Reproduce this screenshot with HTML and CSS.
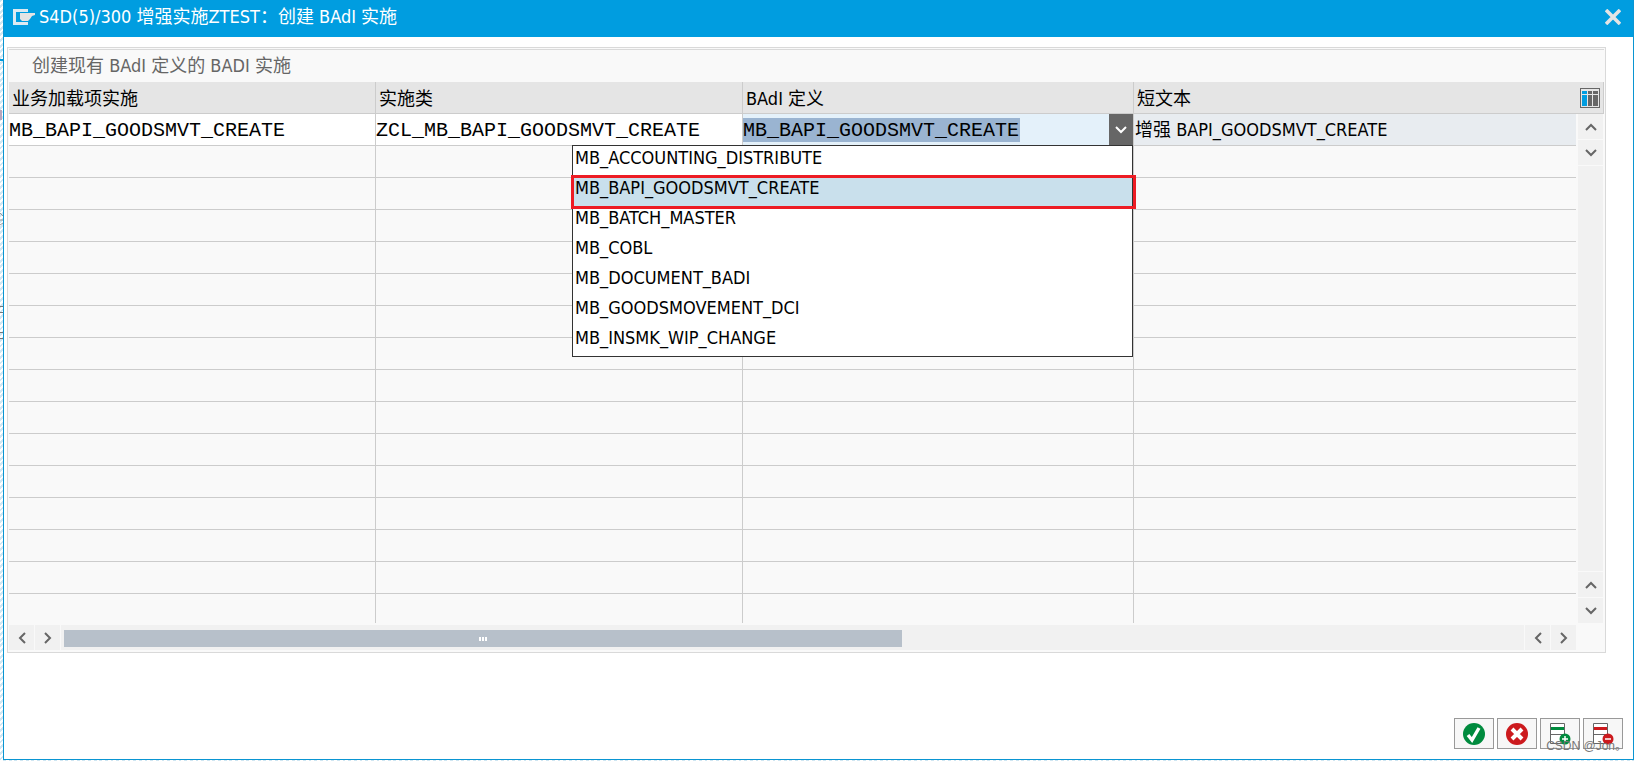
FILE: index.html
```html
<!DOCTYPE html>
<html lang="zh-CN">
<head>
<meta charset="utf-8">
<title>增强实施ZTEST：创建 BAdI 实施</title>
<link rel="stylesheet" href="styles.css">
</head>
<body>
<svg class="backdrop" width="3" height="340" aria-hidden="true"><path d="M0 59h3v2H0z" fill="#009de0"/><path d="M0 110h2v10H0z" fill="#b9a6bd"/><path d="M0 213l3 3M0 220h3M0 225l3-2" stroke="#999" fill="none"/><path d="M0 306h3v1H0zM0 312h3v1H0zM0 332h3v1H0zM0 338h3v1H0z" fill="#777"/></svg>
<div class="dialog" role="dialog" aria-labelledby="dlg-title">
  <header class="titlebar">
    <svg class="title-icon" width="22" height="16" viewBox="0 0 22 16" aria-hidden="true"><path d="M0 0h15v3H3v10h12v3H0z" fill="#dceaf2"/><path d="M7 4h15v2l-3 1-2 3-2 2H9l-2-2z" fill="#e4e4e4"/></svg>
    <h1 class="title" id="dlg-title">S4D(5)/300 增强实施ZTEST：创建 BAdI 实施</h1>
    <button class="close" type="button" aria-label="关闭"><svg width="16" height="16" viewBox="0 0 16 16"><path d="M1 1l14 14M15 1L1 15" stroke="#e4e4e4" stroke-width="3.6" fill="none"/></svg></button>
  </header>
  <main class="content">
    <section class="group">
      <h2 class="group-title">创建现有 BAdI 定义的 BADI 实施</h2>
      <div class="grid">
        <table class="table">
          <colgroup><col class="c1"><col class="c2"><col class="c3"><col></colgroup>
          <thead><tr><th>业务加载项实施</th><th>实施类</th><th>BAdI 定义</th><th>短文本</th></tr></thead>
          <tbody>
            <tr class="active">
              <td><input class="field" aria-label="业务加载项实施" value="MB_BAPI_GOODSMVT_CREATE"></td>
              <td><input class="field" aria-label="实施类" value="ZCL_MB_BAPI_GOODSMVT_CREATE"></td>
              <td class="combo-cell">
                <div class="combo">
                  <input class="field selected-text" role="combobox" aria-expanded="true" aria-controls="badi-list" aria-label="BAdI 定义" value="MB_BAPI_GOODSMVT_CREATE">
                  <button class="combo-button" type="button" aria-label="打开列表"><svg width="12" height="8" viewBox="0 0 12 8"><path d="M1 1l5 5 5-5" stroke="#fff" stroke-width="2" fill="none"/></svg></button>
                </div>
                <ul class="options" id="badi-list" role="listbox">
                  <li role="option">MB_ACCOUNTING_DISTRIBUTE</li>
                  <li class="current" role="option" aria-selected="true">MB_BAPI_GOODSMVT_CREATE</li>
                  <li role="option">MB_BATCH_MASTER</li>
                  <li role="option">MB_COBL</li>
                  <li role="option">MB_DOCUMENT_BADI</li>
                  <li role="option">MB_GOODSMOVEMENT_DCI</li>
                  <li role="option">MB_INSMK_WIP_CHANGE</li>
                </ul>
              </td>
              <td class="readonly">增强 BAPI_GOODSMVT_CREATE</td>
            </tr>
            <tr><td></td><td></td><td></td><td></td></tr>
            <tr><td></td><td></td><td></td><td></td></tr>
            <tr><td></td><td></td><td></td><td></td></tr>
            <tr><td></td><td></td><td></td><td></td></tr>
            <tr><td></td><td></td><td></td><td></td></tr>
            <tr><td></td><td></td><td></td><td></td></tr>
            <tr><td></td><td></td><td></td><td></td></tr>
            <tr><td></td><td></td><td></td><td></td></tr>
            <tr><td></td><td></td><td></td><td></td></tr>
            <tr><td></td><td></td><td></td><td></td></tr>
            <tr><td></td><td></td><td></td><td></td></tr>
            <tr><td></td><td></td><td></td><td></td></tr>
            <tr><td></td><td></td><td></td><td></td></tr>
            <tr><td></td><td></td><td></td><td></td></tr>
            <tr><td></td><td></td><td></td><td></td></tr>
          </tbody>
        </table>
        <div class="side">
          <div class="corner"><button class="config" type="button" aria-label="列设置"><svg width="20" height="20" viewBox="0 0 20 20"><rect width="20" height="20" fill="#666"/><rect x="1" y="1" width="18" height="18" fill="#e5e5e5"/><path d="M2 3h5v3H2zM2 7h5v11H2z" fill="#009de0"/><path d="M8 3h4v3H8zM8 7h4v11H8zM13 3h5v3h-5zM13 7h5v11h-5z" fill="#666"/></svg></button></div>
          <div class="vscroll">
            <button class="step" type="button" aria-label="向上"><svg width="12" height="8" viewBox="0 0 12 8"><path d="M1 7l5-5 5 5"/></svg></button>
            <button class="step" type="button" aria-label="向下"><svg width="12" height="8" viewBox="0 0 12 8"><path d="M1 1l5 5 5-5"/></svg></button>
            <div class="track"></div>
            <button class="step" type="button" aria-label="向上翻页"><svg width="12" height="8" viewBox="0 0 12 8"><path d="M1 7l5-5 5 5"/></svg></button>
            <button class="step" type="button" aria-label="向下翻页"><svg width="12" height="8" viewBox="0 0 12 8"><path d="M1 1l5 5 5-5"/></svg></button>
          </div>
        </div>
        <div class="hscroll">
          <button class="step" type="button" aria-label="向左"><svg width="8" height="12" viewBox="0 0 8 12"><path d="M7 1L2 6l5 5"/></svg></button>
          <button class="step" type="button" aria-label="向右"><svg width="8" height="12" viewBox="0 0 8 12"><path d="M1 1l5 5-5 5"/></svg></button>
          <div class="track"><div class="thumb"><i></i><i></i><i></i></div></div>
          <button class="step" type="button" aria-label="向左翻页"><svg width="8" height="12" viewBox="0 0 8 12"><path d="M7 1L2 6l5 5"/></svg></button>
          <button class="step" type="button" aria-label="向右翻页"><svg width="8" height="12" viewBox="0 0 8 12"><path d="M1 1l5 5-5 5"/></svg></button>
        </div>
      </div>
    </section>
  </main>
  <footer class="actions">
    <button class="action" type="button" aria-label="继续"><svg width="22" height="22" viewBox="0 0 22 22"><circle cx="11" cy="11" r="11" fill="#008b3e"/><path d="M5 12l4 5 7-12" stroke="#fff" stroke-width="3.4" fill="none"/></svg></button>
    <button class="action" type="button" aria-label="取消"><svg width="22" height="22" viewBox="0 0 22 22"><circle cx="11" cy="11" r="11" fill="#cc1a1e"/><path d="M6 6l10 10M16 6L6 16" stroke="#fff" stroke-width="4" fill="none"/></svg></button>
    <button class="action" type="button" aria-label="插入行"><svg width="22" height="22" viewBox="0 0 22 22"><path d="M1.500 20.500V.5h14v20z" fill="#fff" stroke="#666"/><path d="M1 11.500h15" stroke="#666"/><path d="M2 4h13v3H2z" fill="#008b3e"/><circle cx="16" cy="16" r="5.500" fill="#008b3e"/><path d="M16 13v6M13 16h6" stroke="#fff" stroke-width="1.500"/></svg></button>
    <button class="action" type="button" aria-label="删除行"><svg width="22" height="22" viewBox="0 0 22 22"><path d="M1.500 20.500V.5h14v20z" fill="#fff" stroke="#666"/><path d="M1 11.500h15" stroke="#666"/><path d="M2 4h13v3H2z" fill="#cc1a1e"/><circle cx="16" cy="16" r="5.500" fill="#cc1a1e"/><path d="M13 16h6" stroke="#fff" stroke-width="1.500"/></svg></button>
    <span class="watermark">CSDN @Jon。</span>
  </footer>
</div>
</body>
</html>
```
FILE: styles.css
```css
* { box-sizing: border-box; }
body {
  margin: 0;
  padding: 0 0 1px 3px;
  min-height: 100vh;
  display: flex;
  background: repeating-linear-gradient(135deg, #cfe6f2 0 2px, #fff 2px 4px);
  font-family: "DejaVu Sans Condensed", "Noto Sans CJK SC", sans-serif;
  font-size: 18px;
  line-height: 24px;
  color: #000;
}
button { padding: 0; border: 0; background: none; display: flex; align-items: center; justify-content: center; }
.backdrop { position: absolute; left: 0; top: 0; }
.dialog { flex: 1; min-width: 0; display: flex; flex-direction: column; background: #fff; border: 1px solid #0a95d2; border-top: 0; }
.titlebar { display: flex; align-items: center; height: 37px; padding: 0 12px 3px 9px; gap: 4px; background: #009de0; }
.title { margin: 0; flex: 1; font-size: 18px; font-weight: 400; color: #fff; }
.content { padding: 10px 27px 0 3px; }
.group { padding: 1px; background: #f9f9f9; border: 1px solid #d9d9d9; }
.group-title { margin: 0; padding: 4px 23px; border-top: 1px solid #d9d9d9; font-size: 18px; font-weight: 400; color: #666; }
.grid { display: grid; grid-template-columns: 1fr 28px; row-gap: 2px; padding-bottom: 1px; }
.table { width: 100%; table-layout: fixed; border-collapse: separate; border-spacing: 0; }
.c1, .c2 { width: 367px; }
.c3 { width: 391px; }
th { height: 32px; padding: 2px 3px 0; background: #e5e5e5; border-right: 1px solid #ccc; border-bottom: 1px solid #ccc; font-weight: 400; text-align: left; }
td { height: 32px; padding: 0; border-right: 1px solid #ccc; border-bottom: 1px solid #ccc; }
th:last-child, td:last-child { border-right: 0; }
tbody tr:last-child td { height: 29px; border-bottom: 0; }
.active td { background: #fff; }
.active .readonly { padding-left: 1px; background: #e8ecf0; }
.active .combo-cell { position: relative; background: #e4f1fa; }
.field { display: block; width: 100%; height: 24px; padding: 2px 0 0; border: 0; outline: 0; background: none; font: 20px/22px "Liberation Mono", monospace; color: #000; }
.combo { display: flex; align-items: center; justify-content: space-between; height: 31px; }
.selected-text { width: 277px; background: #9ab4d1; }
.combo-button { width: 24px; height: 31px; background: #666; }
.options { position: absolute; z-index: 2; top: 31px; right: 0; width: 561px; margin: 0; padding: 0; list-style: none; background: #fff; border: 1px solid #333; }
.options li { height: 30px; padding: 0 2px; }
.options .current { position: relative; background: #c9e0ec; }
.current::after { content: ""; position: absolute; inset: -1px -4px -3px -2px; border: 3px solid #ed1c24; }
.side { display: flex; flex-direction: column; }
.corner { display: flex; justify-content: center; align-items: center; height: 32px; background: #e5e5e5; border-right: 1px solid #ccc; border-bottom: 1px solid #ccc; }
.vscroll { flex: 1; display: flex; flex-direction: column; gap: 1px; padding: 0 1px 0 2px; }
.step { width: 25px; height: 25px; background: #f1f1f1; flex: none; }
.step path { fill: none; stroke: #666; stroke-width: 2; }
.track { flex: 1; background: #f1f1f1; }
.hscroll { display: flex; gap: 1px; height: 25px; }
.hscroll .track { padding: 5px 3px 3px; }
.thumb { display: flex; align-items: center; justify-content: center; gap: 1px; width: 57.5%; height: 17px; background: #b7c0ca; }
.thumb i { width: 2px; height: 4px; background: #fff; }
.actions { position: relative; display: flex; justify-content: flex-end; gap: 3px; margin-top: auto; padding: 0 10px 10px; }
.action { width: 40px; height: 31px; background: #f7f7f7; border: 1px solid #999; }
.watermark { position: absolute; right: 6px; bottom: 4px; font: 12px/18px "Liberation Sans", "Noto Sans CJK SC", sans-serif; color: #777; }
```
